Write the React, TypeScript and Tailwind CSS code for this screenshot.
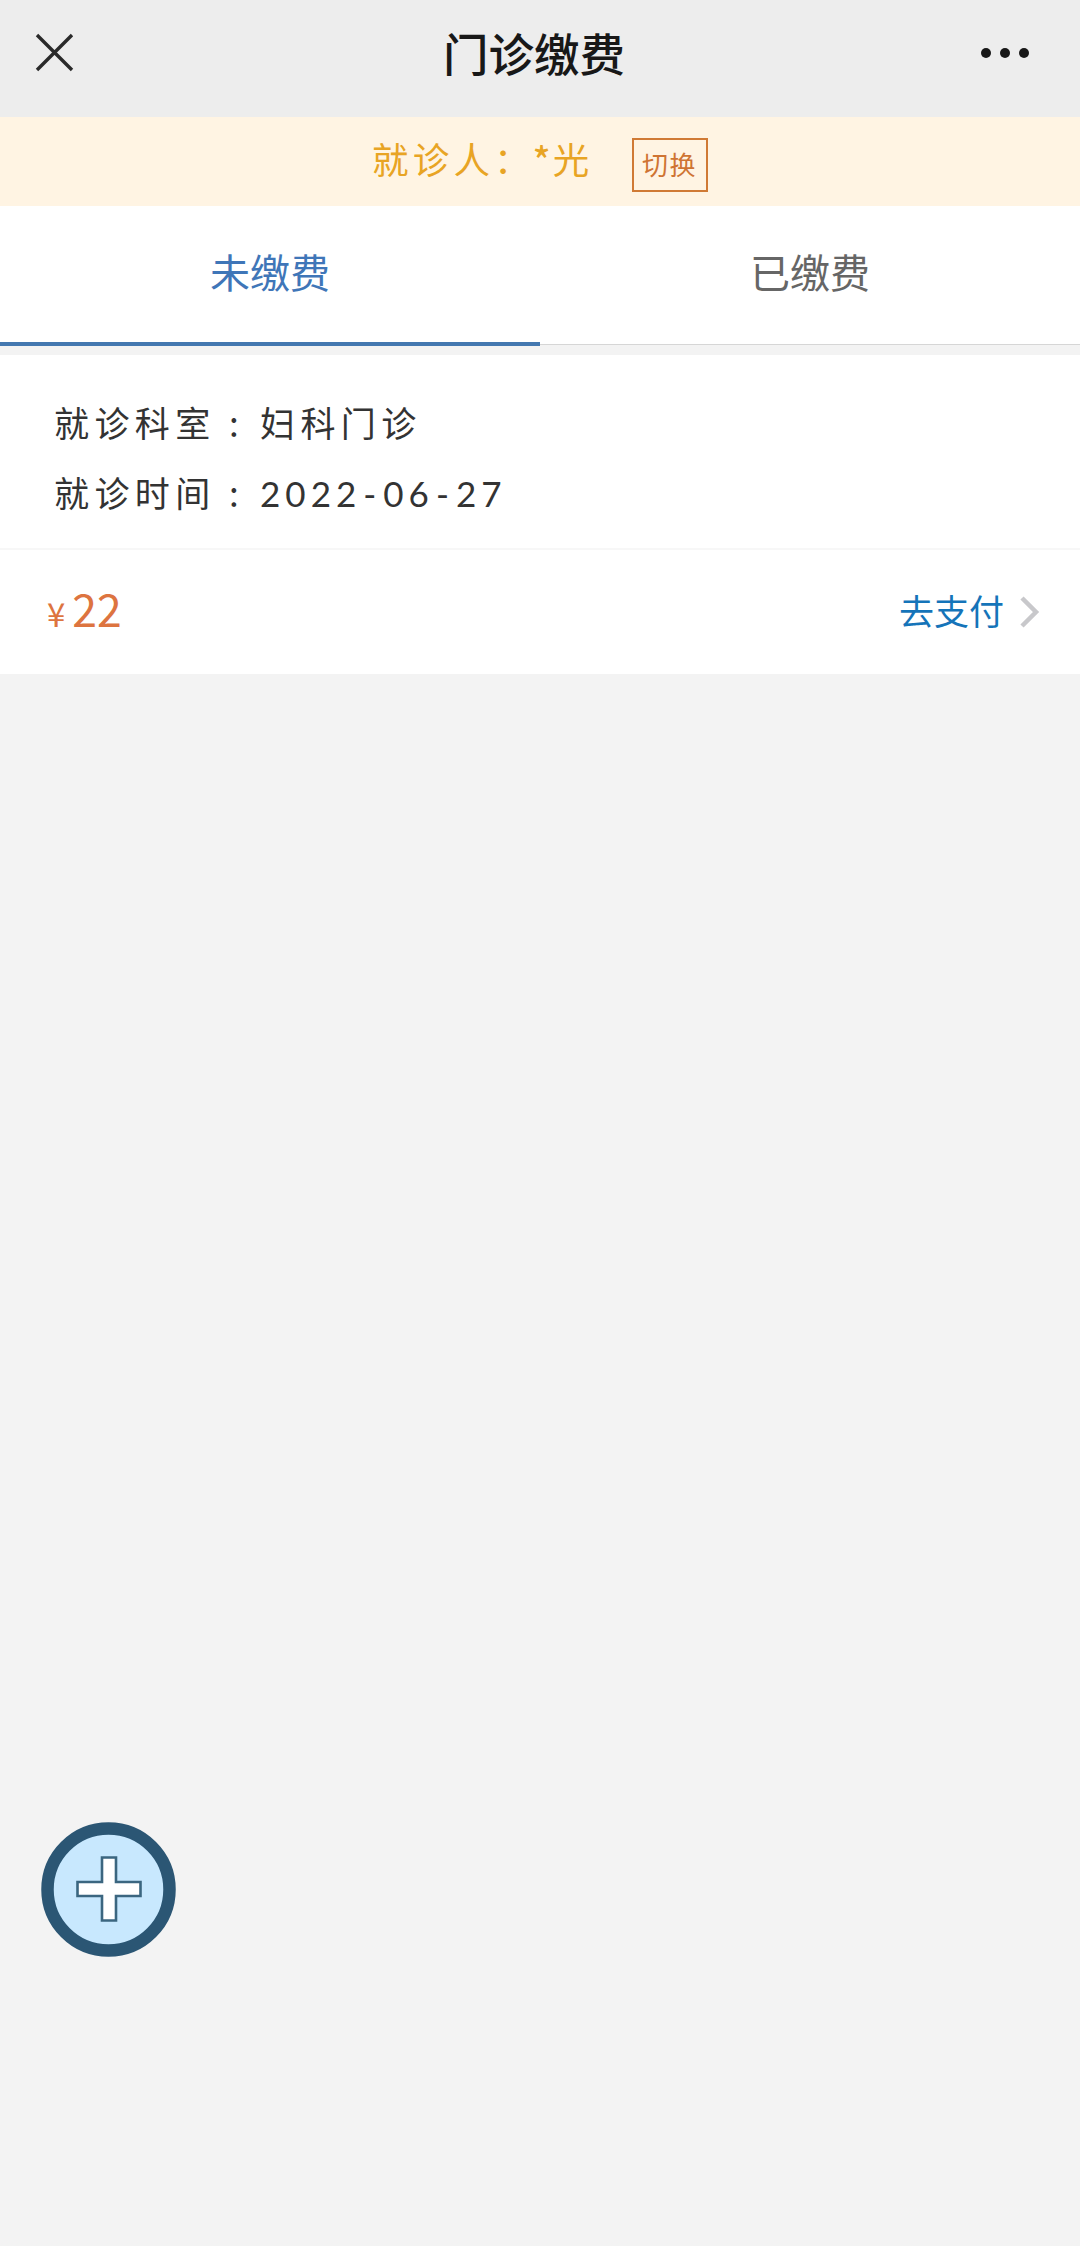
import React from 'react';

const FONT = "font-['Noto_Sans_CJK_SC',sans-serif]";

const App: React.FC = () => {
  const tabs = [
    { name: '未缴费', active: true },
    { name: '已缴费', active: false },
  ];

  const details = [
    { label: '就诊科室', value: '妇科门诊' },
    { label: '就诊时间', value: '2022-06-27' },
  ];

  return (
    <div className={`relative bg-[#f3f3f3] w-[1080px] h-[2246px] overflow-hidden ${FONT}`}>
      {/* Title bar */}
      <header className="flex justify-between items-center bg-[#ededed] pr-[51px] pl-[35px] h-[117px]">
        <svg className="mb-3 w-[39px] h-[39px]" viewBox="0 0 39 39" fill="none" stroke="#2a2a2a" strokeWidth="3.4">
          <path d="M2 2 L37 37 M37 2 L2 37" />
        </svg>
        <h1 className="mb-[11px] ml-[13px] font-medium text-[#181818] text-[45.5px] leading-none">门诊缴费</h1>
        <div className="flex gap-[9px] mb-3">
          <span className="bg-[#181818] rounded-full w-[10px] h-[10px]"></span>
          <span className="bg-[#181818] rounded-full w-[10px] h-[10px]"></span>
          <span className="bg-[#181818] rounded-full w-[10px] h-[10px]"></span>
        </div>
      </header>

      {/* Current patient */}
      <div className="flex items-start bg-[#fff4e3] pl-[372px] h-[89px]">
        <span className="mt-[22px] w-[260px] text-[#e8a424] text-[36.5px] leading-[40px] tracking-[4.2px] whitespace-nowrap">
          就诊人：<span className="-ml-[2px] mr-[-2px] font-medium">*</span>光
        </span>
        <button className="flex justify-center items-center mt-[21px] pr-px pb-[4px] border-2 border-[#d07a35] w-[76px] h-[54px] text-[#cf7433] text-[26px] tracking-[1.6px]">切换</button>
      </div>

      {/* Tabs */}
      <div className="flex bg-white border-[#d6d6d6] border-b h-[139px]">
        {tabs.map((tab) => (
          <div
            key={tab.name}
            className={`w-1/2 h-[140px] pt-[43px] text-center text-[40px] leading-[44px] ${tab.active ? 'border-b-4 border-[#4478b0] text-[#3f76b8]' : 'text-[#666666]'}`}
          >
            {tab.name}
          </div>
        ))}
      </div>

      {/* Bill */}
      <section className="bg-white mt-[10px]">
        <div className="pt-[32px] pl-[54px] border-[#f7f7f7] border-b-2 h-[195px] text-[#333333] text-[35px] leading-[70px] tracking-[5.4px]">
          {details.map((row) => (
            <div key={row.label} className="flex items-baseline h-[70px]">
              <span className="w-[175px]">{row.label}</span>
              <span className="w-[31px]">:</span>
              {/^\d/.test(row.value) ? (
                <span className="font-['Lato',sans-serif] tracking-[5px]">
                  {row.value.split('').map((char, i) => (
                    <span key={i} className={char === '-' ? 'px-[2px]' : ''}>{char}</span>
                  ))}
                </span>
              ) : (
                <span>{row.value}</span>
              )}
            </div>
          ))}
        </div>
        <div className="flex justify-between items-center pr-[40px] pl-[47px] h-[124px]">
          <div className="flex items-baseline mb-[8px] text-[#dd7440]">
            <span className="mr-[7px] text-[33px] leading-none">¥</span>
            <span className="text-[44.5px] leading-none">22</span>
          </div>
          <div className="flex items-center text-[#1574b9] text-[35px]">
            <span className="mb-[3px]">去支付</span>
            <svg className="ml-[16px] w-[20px] h-[32px]" viewBox="0 0 20 32" fill="none" stroke="#c8c8cb" strokeWidth="4.5">
              <path d="M2 2 L16 16 L2 30" />
            </svg>
          </div>
        </div>
      </section>

      {/* Floating shortcut */}
      <button className="top-[1822px] left-[41px] absolute">
        <svg className="w-[135px] h-[135px]" viewBox="0 0 135 135">
          <circle cx="67.5" cy="67.5" r="61" fill="#c8e8fe" stroke="#2b5674" strokeWidth="12.5" />
          <path d="M61 35.500 H75 V60 H99.500 V74 H75 V98.500 H61 V74 H36.500 V60 H61 Z" fill="#ffffff" stroke="#3b6680" strokeWidth="2.600" />
        </svg>
      </button>
    </div>
  );
};

export default App;
